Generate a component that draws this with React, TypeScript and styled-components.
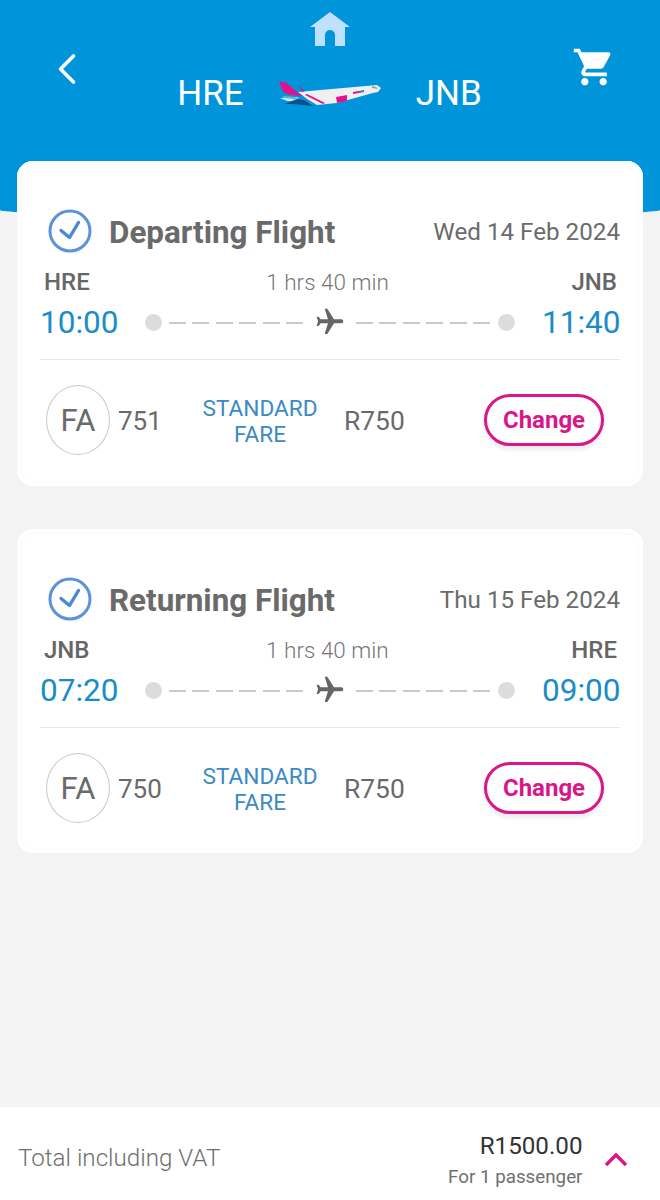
import React from 'react';
import styled, { createGlobalStyle } from 'styled-components';
import { MdShoppingCart, MdFlight } from 'react-icons/md';

const GlobalStyle = createGlobalStyle`
  html, body, #root {
    margin: 0;
    height: 100%;
  }
  body {
    background: #f3f3f3;
    font-family: Roboto, "Noto Sans", sans-serif;
  }
  * {
    box-sizing: border-box;
  }
`;

const Page = styled.div`
  height: 1200px;
  display: flex;
  flex-direction: column;
  overflow: hidden;
`;

const Header = styled.header`
  height: 217px;
  flex: none;
  padding: 8px 42px 0 57px;
  background: #0095db;
  border-radius: 0 0 50% 50% / 0 0 7px 7px;
  display: grid;
  grid-template-columns: 30px 1fr 46px;
`;

const BackButton = styled.div`
  padding-top: 45px;
`;

const HeaderCenter = styled.div`
  display: flex;
  flex-direction: column;
  align-items: center;
`;

const HomeButton = styled.div`
  height: 40px;
  padding-top: 4px;
`;

const RouteRow = styled.div`
  display: flex;
  align-items: center;
  margin-top: 22px;
  gap: 34px;
  color: #fff;
  font-size: 35px;
  line-height: 48px;
`;

const CartButton = styled.div`
  padding-top: 37px;
  color: #fff;
`;

const Main = styled.main`
  flex: 1;
  margin-top: -56px;
  padding: 0 17px;
  display: flex;
  flex-direction: column;
  gap: 43px;
`;

const Card = styled.section`
  background: #fff;
  border-radius: 16px;
  height: 325px;
  padding: 46px 23px 0 23px;
  box-shadow: inset 0 0 0 4px #fff, inset 0 0 0 5px #f8fbfc;

  &:last-child {
    height: 324px;
  }
`;

const TitleRow = styled.div`
  display: flex;
  align-items: center;
  height: 50px;
  padding-left: 7.5px;

  svg {
    margin-bottom: 3px;
  }
`;

const Title = styled.h2`
  margin: 0 0 0 17.5px;
  flex: 1;
  color: #6a6a6a;
  font-size: 31.4px;
  font-weight: 700;
`;

const FlightDate = styled.span`
  color: #6b6b6b;
  font-size: 24.2px;
`;

const LabelRow = styled.div`
  display: flex;
  justify-content: space-between;
  align-items: center;
  height: 28px;
  margin-top: 11px;
  padding: 0 3px 0 4px;
`;

const Airport = styled.span`
  color: #666;
  font-size: 24px;
  font-weight: 500;
`;

const Duration = styled.span`
  color: #777;
  font-size: 22.5px;
  font-weight: 300;
  margin-right: 6px;
`;

const TimeRow = styled.div`
  display: flex;
  align-items: center;
  justify-content: space-between;
  height: 64px;
  padding-bottom: 10px;
  border-bottom: 1px solid #e6e6e6;
`;

const Time = styled.span`
  color: #1a8cc9;
  font-size: 31.5px;
  width: 78px;
`;

const TimeEnd = styled(Time)`
  text-align: right;
`;

const Track = styled.div`
  width: 370px;
  display: flex;
  align-items: center;
`;

const Dot = styled.span`
  width: 17px;
  height: 17px;
  border-radius: 50%;
  background: #dcdcdc;
  flex: none;
`;

const Dashes = styled.span`
  flex: 1;
  height: 2px;
  margin: 0 7px;
  background: repeating-linear-gradient(90deg, #c9c9c9 0 17px, transparent 17px 23.4px);
`;

const PlaneIcon = styled(MdFlight)`
  transform: rotate(90deg);
  color: #666;
  flex: none;
  margin: 0 3.5px 2px 2.5px;
`;

const FareRow = styled.div`
  display: grid;
  grid-template-columns: 72px 76px 132px 1fr auto;
  align-items: center;
  margin-top: 25px;
  padding: 0 16px 0 6px;
`;

const Carrier = styled.span`
  width: 64px;
  height: 70px;
  border-radius: 50%;
  border: 1px solid #c8c8c8;
  display: flex;
  align-items: center;
  justify-content: center;
  color: #6a6a6a;
  font-size: 31px;
`;

const FlightNumber = styled.span`
  color: #6a6a6a;
  font-size: 26px;
  padding-top: 2px;
`;

const FareName = styled.span`
  color: #3b8ac4;
  font-size: 22.6px;
  line-height: 26px;
  text-align: center;
  padding-top: 4px;
`;

const Price = styled.span`
  color: #6a6a6a;
  font-size: 26.4px;
  padding: 2px 0 0 18px;
`;

const ChangeButton = styled.button`
  width: 120px;
  height: 52px;
  background: #fff;
  border: 3px solid #d9168a;
  border-radius: 26px;
  color: #d9168a;
  font-family: inherit;
  font-size: 24px;
  font-weight: 700;
  padding: 0;
  box-shadow: 0 3px 5px rgba(0, 0, 0, 0.1);
`;

const Footer = styled.footer`
  height: 93px;
  flex: none;
  background: #fff;
  display: flex;
  align-items: center;
  padding: 8px 32px 0 18px;
`;

const TotalLabel = styled.span`
  flex: 1;
  color: #6f6f6f;
  font-size: 24.2px;
  font-weight: 300;
`;

const TotalBlock = styled.div`
  display: flex;
  flex-direction: column;
  align-items: flex-end;
  margin-right: 21.5px;
  padding-top: 5px;
`;

const TotalAmount = styled.span`
  color: #333;
  font-size: 24.2px;
  line-height: 34px;
`;

const Passengers = styled.span`
  color: #6f6f6f;
  font-size: 18.8px;
  line-height: 28px;
`;

const ChevronWrap = styled.div`
  display: flex;
  padding-top: 4px;
`;

function CheckCircle() {
  return (
    <svg width="44" height="44" viewBox="0 0 44 44" fill="none">
      <circle cx="22" cy="22" r="20" stroke="#5b93d6" strokeWidth="3" />
      <path d="M13 21.500l8.500 7 9-15" stroke="#4a88d2" strokeWidth="3.400" strokeLinecap="round" strokeLinejoin="round" />
    </svg>
  );
}

function PlaneLogo() {
  return (
    <svg width="104" height="28" viewBox="0 0 104 28">
      <path d="M20 12L99 5l4 3-3 4-5 1-36 10-20 2-10-6z" fill="#efeff1" />
      <path d="M2 18l18-1-1 5-10-1z" fill="#dbe3ea" />
      <path d="M5 16c11 0 21 3 29 8l-3 1c-7-4-16-7-26-7z" fill="#4fb9e3" />
      <path d="M7 24c6-3 11-5 15-5 5 1 10 4 13 7-4 0-7-1-10-1-6-1-12-1-18-1z" fill="#0e4f8c" />
      <path d="M1 1l8 2 11 10 5 3-13-1-7-3z" fill="#e0138c" />
      <path d="M20 5l7 6-3 1z" fill="#9a3a8c" />
      <path d="M29 14l18 9-2 1-18-9z" fill="#e0138c" />
      <path d="M58 17l11-2v6l-10 2z" fill="#e0138c" />
      <path d="M75 12l6-1v2l-6 1z" fill="#e0138c" />
      <path d="M81 11l5-1v2l-5 1z" fill="#3c78b4" />
      <path d="M94 6l4 1 2 2-6-1z" fill="#8aa2b5" />
    </svg>
  );
}

function HomeIcon() {
  return (
    <svg width="40" height="34" viewBox="0 0 40 34">
      <path d="M20 0L40 15H35V34H25V23a5 5 0 0 0-10 0V34H5V15H0z" fill="#bfe0ff" />
    </svg>
  );
}

function BackIcon() {
  return (
    <svg width="20" height="32" viewBox="0 0 20 32" fill="none">
      <path d="M16.500 3L3.500 16l13 13" stroke="#fff" strokeWidth="3.600" strokeLinecap="round" strokeLinejoin="round" />
    </svg>
  );
}

function ChevronUp() {
  return (
    <svg width="24" height="16" viewBox="0 0 24 16" fill="none">
      <path d="M2 13l10-10 10 10" stroke="#d9168a" strokeWidth="3.400" />
    </svg>
  );
}

type Flight = {
  title: string;
  date: string;
  from: string;
  to: string;
  departs: string;
  arrives: string;
  number: string;
};

const flights: Flight[] = [
  { title: 'Departing Flight', date: 'Wed 14 Feb 2024', from: 'HRE', to: 'JNB', departs: '10:00', arrives: '11:40', number: '751' },
  { title: 'Returning Flight', date: 'Thu 15 Feb 2024', from: 'JNB', to: 'HRE', departs: '07:20', arrives: '09:00', number: '750' },
];

function FlightCard({ flight }: { flight: Flight }) {
  return (
    <Card>
      <TitleRow>
        <CheckCircle />
        <Title>{flight.title}</Title>
        <FlightDate>{flight.date}</FlightDate>
      </TitleRow>
      <LabelRow>
        <Airport>{flight.from}</Airport>
        <Duration>1 hrs 40 min</Duration>
        <Airport>{flight.to}</Airport>
      </LabelRow>
      <TimeRow>
        <Time>{flight.departs}</Time>
        <Track>
          <Dot />
          <Dashes />
          <PlaneIcon size={32} />
          <Dashes />
          <Dot />
        </Track>
        <TimeEnd>{flight.arrives}</TimeEnd>
      </TimeRow>
      <FareRow>
        <Carrier>FA</Carrier>
        <FlightNumber>{flight.number}</FlightNumber>
        <FareName>STANDARD FARE</FareName>
        <Price>R750</Price>
        <ChangeButton>Change</ChangeButton>
      </FareRow>
    </Card>
  );
}

export default function App() {
  return (
    <Page>
      <GlobalStyle />
      <Header>
        <BackButton>
          <BackIcon />
        </BackButton>
        <HeaderCenter>
          <HomeButton>
            <HomeIcon />
          </HomeButton>
          <RouteRow>
            <span>HRE</span>
            <PlaneLogo />
            <span>JNB</span>
          </RouteRow>
        </HeaderCenter>
        <CartButton>
          <MdShoppingCart size={44} />
        </CartButton>
      </Header>
      <Main>
        {flights.map((flight) => (
          <FlightCard key={flight.number} flight={flight} />
        ))}
      </Main>
      <Footer>
        <TotalLabel>Total including VAT</TotalLabel>
        <TotalBlock>
          <TotalAmount>R1500.00</TotalAmount>
          <Passengers>For 1 passenger</Passengers>
        </TotalBlock>
        <ChevronWrap>
          <ChevronUp />
        </ChevronWrap>
      </Footer>
    </Page>
  );
}
